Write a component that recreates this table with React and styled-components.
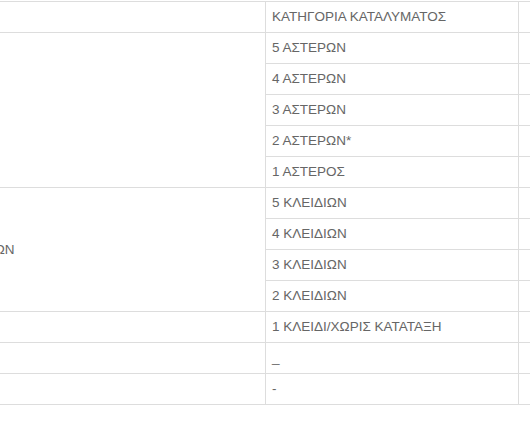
import React from 'react';
import styled, { createGlobalStyle } from 'styled-components';

const GlobalStyle = createGlobalStyle`
    html, body {
        margin: 0;
        padding: 0;
        background: #fff;
        overflow: hidden;
    }
`

const Wrapper = styled.div`
    width: 530px;
    height: 434px;
    overflow: hidden;
    padding-top: 1px;
    box-sizing: border-box;
`

const Table = styled.table`
    border-collapse: collapse;
    width: 871px;
    margin-left: -233px;
    table-layout: fixed;
    font-family: "Liberation Sans", Arial, sans-serif;
    font-size: 13.5px;
    color: #666;
`

const Cell = styled.td`
    border: 1px solid #ddd;
    height: 18px;
    padding: 6px 6px;
    line-height: 18px;
    white-space: nowrap;
    vertical-align: middle;
    text-align: left;
    overflow: hidden;
`

const categories = [
    { group: "", items: ["5 ΑΣΤΕΡΩΝ", "4 ΑΣΤΕΡΩΝ", "3 ΑΣΤΕΡΩΝ", "2 ΑΣΤΕΡΩΝ*", "1 ΑΣΤΕΡΟΣ"] },
    { group: "ΕΝΟΙΚΙΑΖΟΜΕΝΑ ΔΩΜΑΤΙΑ ΚΛΕΙΔΙΩΝ", items: ["5 ΚΛΕΙΔΙΩΝ", "4 ΚΛΕΙΔΙΩΝ", "3 ΚΛΕΙΔΙΩΝ", "2 ΚΛΕΙΔΙΩΝ"] },
    { group: "", items: ["1 ΚΛΕΙΔΙ/ΧΩΡΙΣ ΚΑΤΑΤΑΞΗ"] },
    { group: "", items: ["_"] },
    { group: "", items: ["-"] },
]

function App() {
    return (
        <Wrapper>
            <GlobalStyle />
            <Table>
                <colgroup>
                    <col style={{ width: 498 }} />
                    <col style={{ width: 253 }} />
                    <col style={{ width: 120 }} />
                </colgroup>
                <tbody>
                    <tr>
                        <Cell></Cell>
                        <Cell>ΚΑΤΗΓΟΡΙΑ ΚΑΤΑΛΥΜΑΤΟΣ</Cell>
                        <Cell></Cell>
                    </tr>
                    {categories.map((cat, c) =>
                        cat.items.map((item, i) => (
                            <tr key={c + item}>
                                {i === 0 && <Cell rowSpan={cat.items.length}>{cat.group}</Cell>}
                                <Cell>{item}</Cell>
                                <Cell></Cell>
                            </tr>
                        ))
                    )}
                </tbody>
            </Table>
        </Wrapper>
    )
}

export default App
